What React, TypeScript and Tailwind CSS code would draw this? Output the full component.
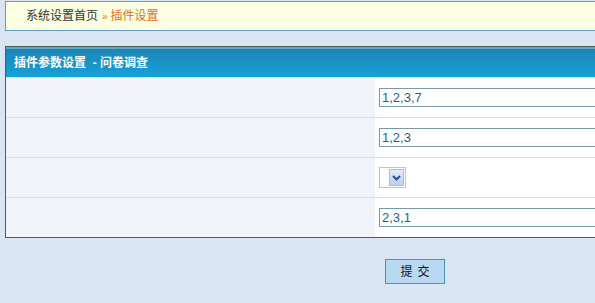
import React from "react";

const rows = [
  { kind: "input", value: "1,2,3,7" },
  { kind: "input", value: "1,2,3" },
  { kind: "select", value: "" },
  { kind: "input", value: "2,3,1" },
];

function SelectBox() {
  return (
    <div className="flex h-[21px] w-[27px] items-center justify-end border border-[#c4c4c4] bg-white pr-[1px]">
      <div className="flex h-[17px] w-[15px] items-center justify-center border border-[#a6bde0] bg-gradient-to-b from-[#e3edfb] to-[#b9d0f2]">
        <svg width="9" height="6" viewBox="0 0 9 6">
          <path d="M1 1 L4.5 4.5 L8 1" fill="none" stroke="#2b4f93" strokeWidth="2" />
        </svg>
      </div>
    </div>
  );
}

export default function App() {
  return (
    <div
      className="h-[303px] w-[595px] overflow-hidden bg-[#d9e5f3] pt-[1px] text-[12px]"
      style={{ fontFamily: '"Liberation Sans", "Noto Sans CJK SC", sans-serif' }}
    >
      {/* Breadcrumb */}
      <div className="ml-[5px] flex h-[30px] w-[620px] items-center border border-[#5a9fcf] bg-[#fbfee1] pl-[20px]">
        <span className="text-[#333333]">系统设置首页</span>
        <span className="ml-[4px] text-[10px] text-[#e0701a]">»</span>
        <span className="ml-[3px] text-[#e0701a]">插件设置</span>
      </div>

      {/* Settings panel */}
      <div className="ml-[5px] mt-[15px] w-[620px] border border-[#4e5f58] bg-[#f0f3f7]">
        <div className="flex h-[30px] items-center whitespace-pre border-t-[2px] border-[#5ea8c4] bg-gradient-to-b from-[#1b86b6] to-[#14a1d9] pl-[8px] font-bold text-white">
          插件参数设置  - 问卷调查
        </div>
        {rows.map((row, i) => (
          <div key={i} className="flex h-[40px] border-t border-[#cfe1ee]">
            <div className="w-[369px] shrink-0 bg-[#f0f3f7]" />
            <div className="flex min-w-0 flex-1 items-center overflow-hidden bg-white pl-[4px]">
              {row.kind === "select" ? (
                <SelectBox />
              ) : (
                <div className="flex h-[19px] w-[300px] shrink-0 items-center border border-[#7898b0] bg-white pl-[2px] text-[13px] text-[#1f5f8b]">
                  {row.value}
                </div>
              )}
            </div>
          </div>
        ))}
      </div>

      {/* Submit */}
      <div className="ml-[385px] mt-[21px]">
        <button className="flex h-[25px] w-[60px] items-center justify-center gap-[5px] border border-[#3a9bc9] bg-[#b8d8f4] text-[#111111]">
          <span>提</span>
          <span>交</span>
        </button>
      </div>
    </div>
  );
}
